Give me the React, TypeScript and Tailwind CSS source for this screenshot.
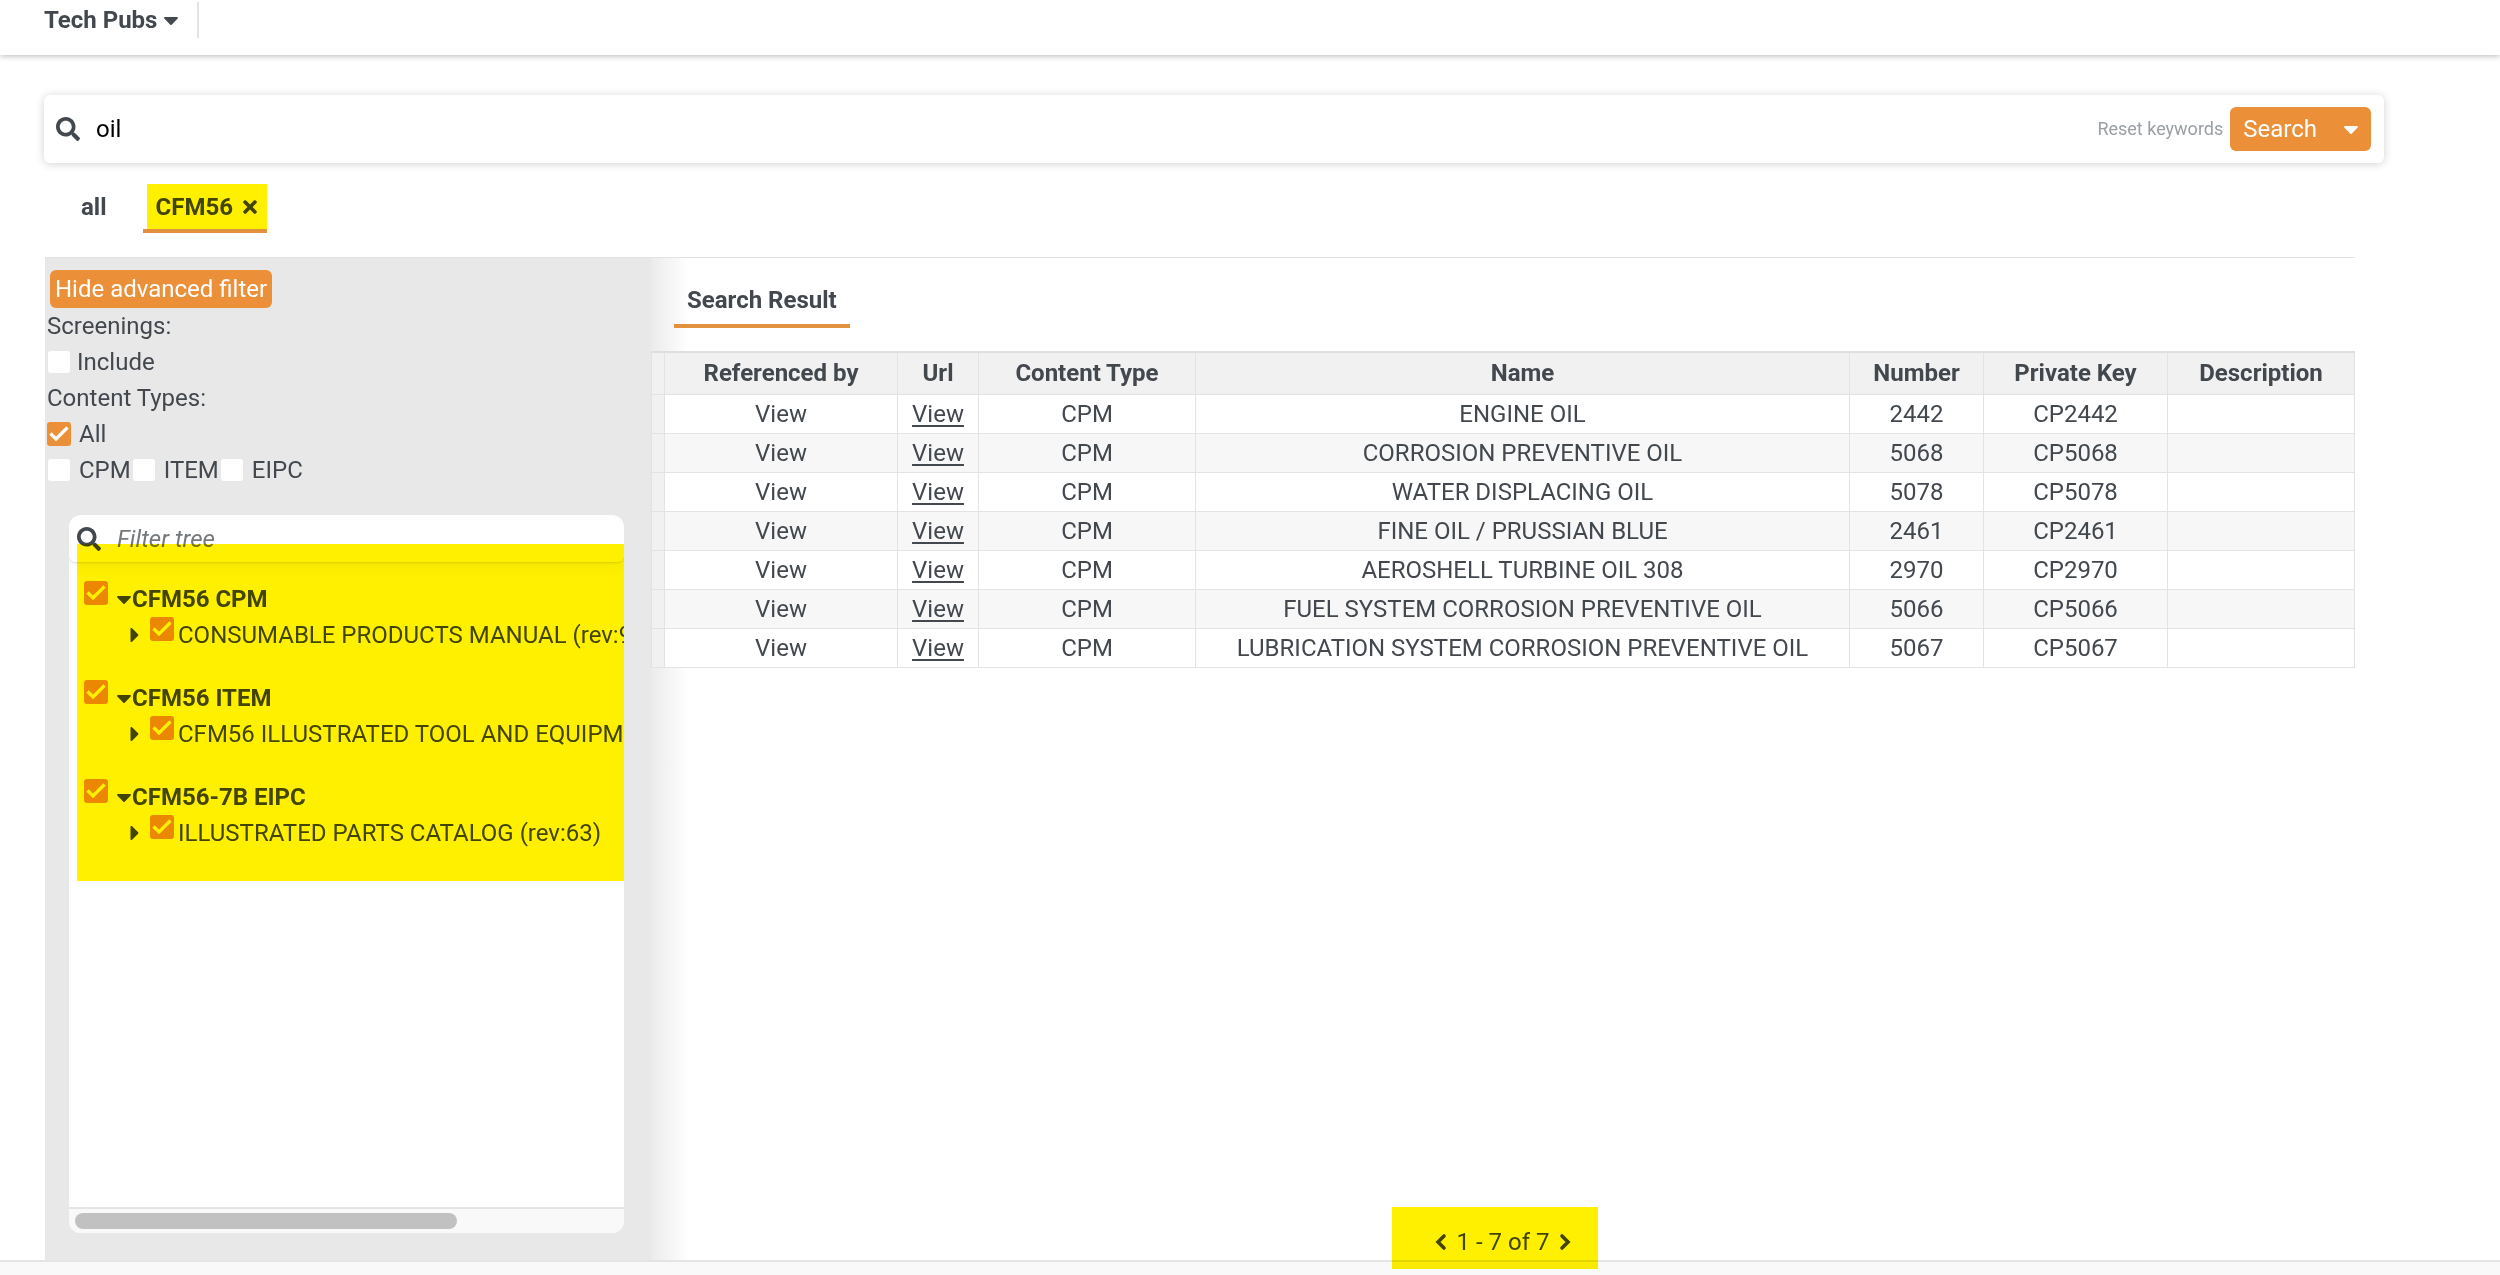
import { useState } from "react";
import { FaCaretDown, FaCaretRight, FaSearch, FaTimes } from "react-icons/fa";

type Row = { name: string; number: string; key: string };

const rows: Row[] = [
  { name: "ENGINE OIL", number: "2442", key: "CP2442" },
  { name: "CORROSION PREVENTIVE OIL", number: "5068", key: "CP5068" },
  { name: "WATER DISPLACING OIL", number: "5078", key: "CP5078" },
  { name: "FINE OIL / PRUSSIAN BLUE", number: "2461", key: "CP2461" },
  { name: "AEROSHELL TURBINE OIL 308", number: "2970", key: "CP2970" },
  { name: "FUEL SYSTEM CORROSION PREVENTIVE OIL", number: "5066", key: "CP5066" },
  { name: "LUBRICATION SYSTEM CORROSION PREVENTIVE OIL", number: "5067", key: "CP5067" },
];

const headings = ["Referenced by", "Url", "Content Type", "Name", "Number", "Private Key", "Description"];

const tree = [
  { title: "CFM56 CPM", child: "CONSUMABLE PRODUCTS MANUAL (rev:9" },
  { title: "CFM56 ITEM", child: "CFM56 ILLUSTRATED TOOL AND EQUIPM" },
  { title: "CFM56-7B EIPC", child: "ILLUSTRATED PARTS CATALOG (rev:63)" },
];

function Checkbox({ id, label, initial = false }: { id: string; label?: string; initial?: boolean }) {
  const [checked, setChecked] = useState(initial);
  return (
    <span className="grid size-6 shrink-0 place-items-center">
      <input
        id={id}
        type="checkbox"
        aria-label={label}
        checked={checked}
        onChange={(e) => setChecked(e.target.checked)}
        className="col-start-1 row-start-1 size-[22px] appearance-none rounded-[3px] bg-white checked:size-6 checked:bg-[#eb9039]"
      />
      {checked && (
        <svg viewBox="0 0 24 24" fill="none" className="pointer-events-none col-start-1 row-start-1 size-6 text-white">
          <path d="M3.5 11.5 9 17 20.5 5.5" stroke="currentColor" strokeWidth="3.2" />
        </svg>
      )}
    </span>
  );
}

function Chevron({ points }: { points: string }) {
  return (
    <svg viewBox="0 0 12 18" fill="none" className="h-[18px] w-3">
      <polyline points={points} stroke="currentColor" strokeWidth="3.6" strokeLinecap="round" />
    </svg>
  );
}

function Highlight({ className }: { className: string }) {
  return <span aria-hidden="true" className={`pointer-events-none absolute bg-[#fff000] mix-blend-multiply ${className}`} />;
}

function Header() {
  return (
    <header className="flex h-[55px] items-start pt-0.5 pl-11 shadow-[0_1px_6px_rgba(0,0,0,0.28)]">
      <button type="button" className="flex h-9 items-center gap-1.5 border-r-2 border-[#e4e4e4] pr-[18px] font-bold">
        Tech Pubs
        <FaCaretDown className="h-6 w-4" />
      </button>
    </header>
  );
}

function SearchBar() {
  return (
    <form
      className="mt-10 mr-[116px] ml-11 flex h-[68px] items-center rounded-md bg-white pr-[13px] pl-3 shadow-[0_1px_10px_rgba(0,0,0,0.18)]"
      onSubmit={(e) => e.preventDefault()}
    >
      <FaSearch className="size-6" />
      <input aria-label="Keywords" defaultValue="oil" className="ml-4 min-w-0 flex-1 text-black outline-none" />
      <button type="button" className="mr-[7px] text-lg text-[#9a9fa3]">
        Reset keywords
      </button>
      <div className="flex h-11 rounded-md bg-[#eb9039] text-white">
        <button type="submit" className="pl-[13px]">
          Search
        </button>
        <button type="button" aria-label="Search options" className="pr-3 pl-[26px]">
          <FaCaretDown className="h-6 w-4" />
        </button>
      </div>
    </form>
  );
}

function Tabs() {
  return (
    <nav className="mt-[21px] mb-6 ml-[45px] flex h-[49px] font-bold">
      <button type="button" className="px-9 pb-1">
        all
      </button>
      <button type="button" className="relative flex items-center gap-2.5 border-b-4 border-[#e2913f] pr-2.5 pl-[13px]">
        CFM56
        <FaTimes className="h-5 w-3.5" />
        <Highlight className="top-0 right-0 bottom-0 left-1" />
      </button>
    </nav>
  );
}

function TreePanel() {
  return (
    <section className="relative mt-[27px] mr-[27px] ml-6 flex flex-1 flex-col overflow-hidden rounded-xl bg-white">
      <div className="flex h-[47px] shrink-0 items-center rounded-md pl-2 shadow-[0_1px_2px_rgba(0,0,0,0.12),0_6px_14px_rgba(0,0,0,0.04)]">
        <FaSearch className="size-6" />
        <input
          aria-label="Filter tree"
          placeholder="Filter tree"
          className="ml-4 min-w-0 flex-1 italic outline-none placeholder:text-[#75797c]"
        />
      </div>
      <ul className="flex flex-1 flex-col gap-[27px] pt-[19px] whitespace-nowrap">
        {tree.map((group, i) => (
          <li key={group.title}>
            <div className="flex h-9 items-start pl-[15px] leading-9 font-bold">
              <Checkbox id={`group-${i}`} label={group.title} initial />
              <button type="button" className="ml-2 flex items-center">
                <FaCaretDown className="h-6 w-4" />
                {group.title}
              </button>
            </div>
            <div className="flex h-9 items-start pl-[58px] leading-9">
              <button
                type="button"
                aria-label={`Expand ${group.child}`}
                className="flex h-9 w-[23px] shrink-0 items-center"
              >
                <FaCaretRight className="h-6 w-4" />
              </button>
              <Checkbox id={`child-${i}`} initial />
              <label htmlFor={`child-${i}`} className="ml-1">
                {group.child}
              </label>
            </div>
          </li>
        ))}
      </ul>
      <div className="flex h-[26px] items-center border-t-2 border-[#e4e4e4] bg-[#f9f9f9] pr-1 pl-1.5">
        <div className="h-4 w-[70%] rounded-full bg-[#c1c1c1]" />
      </div>
      <Highlight className="top-[29px] right-0 left-2 h-[337px]" />
    </section>
  );
}

function Sidebar() {
  return (
    <aside className="flex w-[606px] shrink-0 flex-col bg-[#e8e8e8] pt-3 pb-[27px]">
      <button type="button" className="ml-[5px] h-[38px] self-start rounded-md bg-[#eb9039] px-[5px] text-white">
        Hide advanced filter
      </button>
      <div className="pl-0.5 leading-9">
        <p>Screenings:</p>
        <div className="flex items-center gap-1.5">
          <Checkbox id="include" />
          <label htmlFor="include">Include</label>
        </div>
        <p>Content Types:</p>
        <div className="flex items-center gap-2">
          <Checkbox id="all" initial />
          <label htmlFor="all">All</label>
        </div>
        <div className="flex items-center gap-px">
          {["CPM", "ITEM", "EIPC"].map((type) => (
            <div key={type} className="flex items-center gap-2">
              <Checkbox id={type} />
              <label htmlFor={type}>{type}</label>
            </div>
          ))}
        </div>
      </div>
      <TreePanel />
    </aside>
  );
}

function Results() {
  return (
    <main className="flex min-w-0 flex-1 flex-col bg-[linear-gradient(to_right,#ebebeb,#ffffff_38px)]">
      <button
        type="button"
        className="mt-[18px] mb-[23px] ml-[23px] h-[52px] self-start border-b-4 border-[#e2913f] px-[13px] font-bold"
      >
        Search Result
      </button>
      <table className="w-full table-fixed border-collapse text-center">
        <colgroup>
          <col className="w-[13px]" />
          <col className="w-[233px]" />
          <col className="w-[81px]" />
          <col className="w-[217px]" />
          <col />
          <col className="w-[134px]" />
          <col className="w-[184px]" />
          <col className="w-[187px]" />
        </colgroup>
        <thead>
          <tr className="h-[42px] border-t-2 border-[#dedede] bg-[#f1f1f1]">
            <td className="border border-[#e3e3e3]" />
            {headings.map((h) => (
              <th key={h} scope="col" className="border border-[#e3e3e3] font-bold">
                {h}
              </th>
            ))}
          </tr>
        </thead>
        <tbody>
          {rows.map((row) => (
            <tr key={row.key} className="h-[39px] bg-white even:bg-[#f7f7f7]">
              <td className="border border-[#e3e3e3] bg-[#f1f1f1]" />
              <td className="border border-[#e3e3e3]">View</td>
              <td className="border border-[#e3e3e3]">
                <a href="#view" className="underline underline-offset-3">
                  View
                </a>
              </td>
              <td className="border border-[#e3e3e3]">CPM</td>
              <td className="border border-[#e3e3e3]">{row.name}</td>
              <td className="border border-[#e3e3e3]">{row.number}</td>
              <td className="border border-[#e3e3e3]">{row.key}</td>
              <td className="border border-[#e3e3e3]" />
            </tr>
          ))}
        </tbody>
      </table>
      <div className="relative mx-auto mt-auto flex h-9 items-center gap-2.5">
        <button type="button" aria-label="Previous page">
          <Chevron points="9,3 3,9 9,15" />
        </button>
        1 - 7 of 7
        <button type="button" aria-label="Next page">
          <Chevron points="3,3 9,9 3,15" />
        </button>
        <Highlight className="-top-[17px] -right-[27px] -bottom-[9px] -left-[43px]" />
      </div>
    </main>
  );
}

export default function App() {
  return (
    <div className="flex min-h-screen flex-col bg-white font-[Roboto,sans-serif] text-2xl leading-8 text-[#42484e]">
      <Header />
      <SearchBar />
      <Tabs />
      <div className="mr-[145px] ml-[45px] flex flex-1 border-t border-[#e2e2e4]">
        <Sidebar />
        <Results />
      </div>
      <footer className="h-[15px] border-t-2 border-[#e4e4e4] bg-[#f9f9f9]" />
    </div>
  );
}
